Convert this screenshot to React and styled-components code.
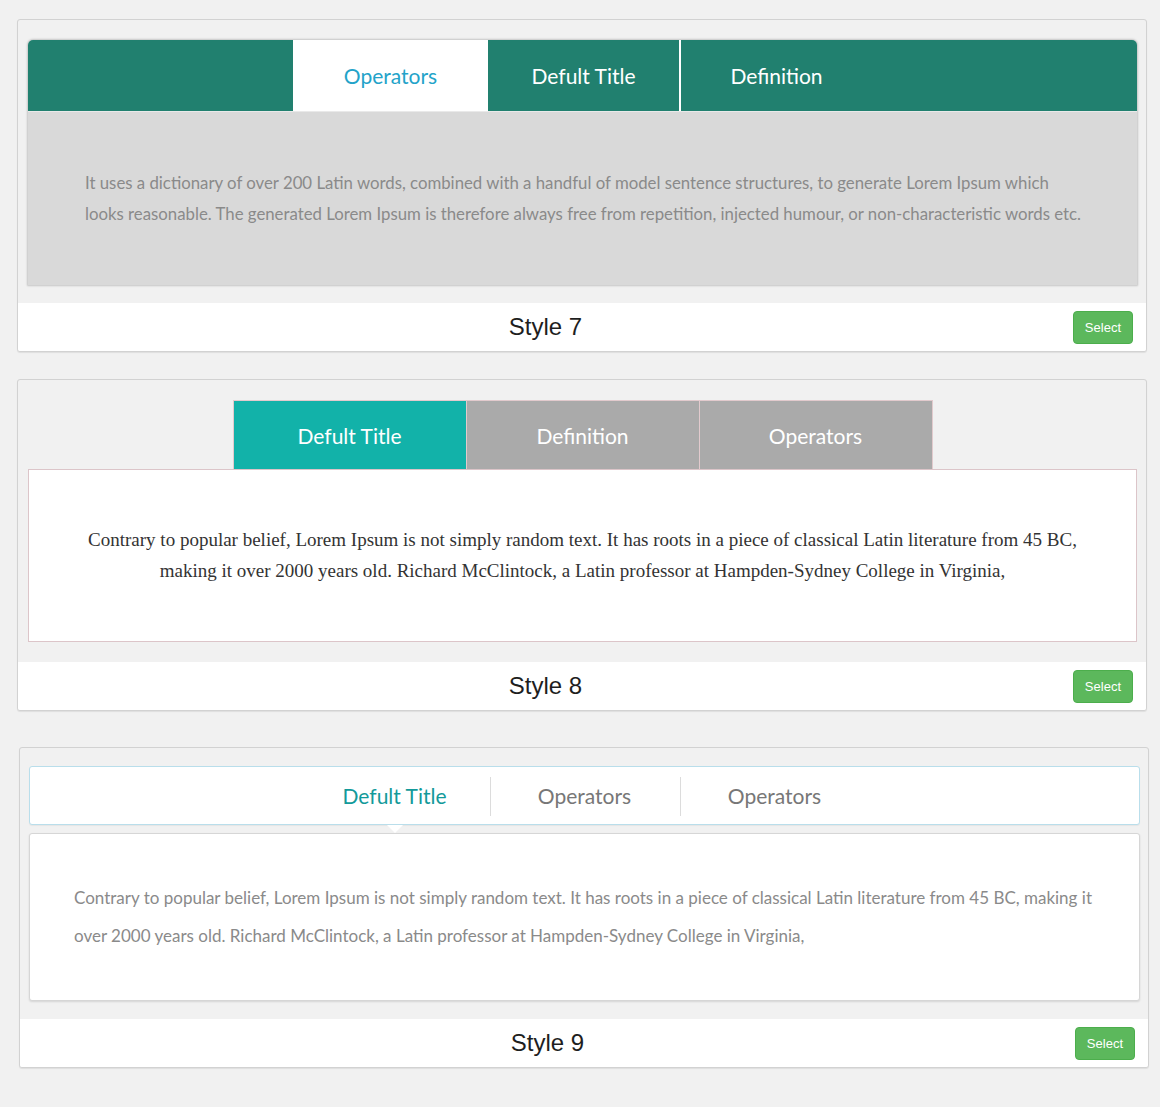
import styled, { createGlobalStyle, css } from "styled-components";

const GlobalStyle = createGlobalStyle`
  html, body {
    margin: 0;
    padding: 0;
    background: #f1f1f1;
  }
`;

const HUMAN = `Lato, "Open Sans", sans-serif`;

const Page = styled.div`
  width: 1160px;
  min-height: 1107px;
  box-sizing: border-box;
  padding: 19px 0 40px 17px;
  background: #f1f1f1;
`;

const Card = styled.section`
  width: 1130px;
  box-sizing: border-box;
  margin-top: ${(p) => p.$gap || 0}px;
  margin-left: ${(p) => p.$shift || 0}px;
  border: 1px solid #d2d2d2;
  border-radius: 3px;
  background: #f1f1f1;
  box-shadow: 0 1px 1px rgba(0, 0, 0, 0.08);
  overflow: hidden;
`;

const Preview = styled.div`
  padding: ${(p) => p.$pad || "20px 9px 18px 10px"};
`;

const Footer = styled.div`
  display: flex;
  align-items: center;
  height: 48px;
  background: #fff;
  padding-right: 13px;
`;

const FooterTitle = styled.h3`
  flex: 1;
  margin: 0;
  text-align: center;
  font-family: "Liberation Sans", Arial, sans-serif;
  font-weight: normal;
  font-size: 24px;
  color: #1e1e1e;
`;

const SelectButton = styled.button`
  font-family: "Liberation Sans", Arial, sans-serif;
  font-size: 13px;
  line-height: 19px;
  padding: 6px 11px;
  color: #fff;
  background: #5cb85c;
  border: 1px solid #4cae4c;
  border-radius: 4px;
  cursor: pointer;
`;

/* ---------- style 7 ---------- */

const Widget7 = styled.div`
  border-radius: 5px 5px 0 0;
  box-shadow: 0 0 2px 1px rgba(0, 0, 0, 0.18);
  overflow: hidden;
`;

const Bar7 = styled.div`
  display: flex;
  justify-content: center;
  height: 71px;
  background: #21806f;
  border-bottom: 1px solid #e9e9e9;
`;

const Tab7 = styled.div`
  width: 191px;
  display: flex;
  align-items: center;
  justify-content: center;
  font-family: ${HUMAN};
  font-size: 21px;
  color: #fff;
  border-left: 2px solid #fff;
  ${(p) =>
    p.$active &&
    css`
      background: #fff;
      color: #23a3c9;
    `}
`;

const Body7 = styled.div`
  background: #d9d9d9;
  padding: 55px 50px 56px 57px;
  font-family: ${HUMAN};
  font-size: 16.8px;
  line-height: 31px;
  color: #8a8a8a;
`;

/* ---------- style 8 ---------- */

const Bar8 = styled.div`
  display: flex;
  justify-content: center;
`;

const Tab8 = styled.div`
  width: 232px;
  height: 68px;
  display: flex;
  align-items: center;
  justify-content: center;
  font-family: ${HUMAN};
  font-size: 21px;
  color: #fff;
  background: ${(p) => (p.$active ? "#12b2a9" : "#aaaaaa")};
  border: 1px solid #e2cacd;
  border-bottom: none;
  &:not(:first-child) {
    border-left: none;
  }
`;

const Body8 = styled.div`
  background: #fff;
  border: 1px solid #dcc5c9;
  padding: 54px 40px 55px;
  text-align: center;
  font-family: "Liberation Serif", "Times New Roman", serif;
  font-size: 19px;
  line-height: 31px;
  color: #333;
`;

/* ---------- style 9 ---------- */

const Bar9 = styled.div`
  display: flex;
  justify-content: center;
  align-items: center;
  height: 57px;
  background: #fff;
  border: 1px solid #b9deeb;
  border-radius: 3px;
  box-shadow: 0 1px 1px rgba(0, 0, 0, 0.05);
`;

const Tab9 = styled.div`
  position: relative;
  width: 190px;
  height: 57px;
  display: flex;
  align-items: center;
  justify-content: center;
  font-family: ${HUMAN};
  font-size: 21px;
  color: ${(p) => (p.$active ? "#139a9a" : "#777")};
  &:not(:first-child)::before {
    content: "";
    position: absolute;
    left: 0;
    top: 10px;
    bottom: 8px;
    width: 1px;
    background: #dcdcdc;
  }
  ${(p) =>
    p.$active &&
    css`
      &::after {
        content: "";
        position: absolute;
        left: 50%;
        bottom: -9px;
        margin-left: -8px;
        border-left: 8px solid transparent;
        border-right: 8px solid transparent;
        border-top: 8px solid #fff;
      }
    `}
`;

const Body9 = styled.div`
  margin-top: 8px;
  background: #fff;
  border: 1px solid #d6d6d6;
  border-radius: 3px;
  box-shadow: 0 1px 2px rgba(0, 0, 0, 0.12);
  padding: 45px 36px 45px 44px;
  font-family: ${HUMAN};
  font-size: 17px;
  line-height: 38px;
  color: #8a8a8a;
`;

const CardFooter = ({ title }) => (
  <Footer>
    <FooterTitle>{title}</FooterTitle>
    <SelectButton>Select</SelectButton>
  </Footer>
);

const App = () => {
  return (
    <Page>
      <GlobalStyle />

      <Card>
        <Preview>
          <Widget7>
            <Bar7>
              <Tab7 $active>Operators</Tab7>
              <Tab7>Defult Title</Tab7>
              <Tab7>Definition</Tab7>
            </Bar7>
            <Body7>
              It uses a dictionary of over 200 Latin words, combined with a handful of model
              sentence structures, to generate Lorem Ipsum which looks reasonable. The generated
              Lorem Ipsum is therefore always free from repetition, injected humour, or
              non-characteristic words etc.
            </Body7>
          </Widget7>
        </Preview>
        <CardFooter title="Style 7" />
      </Card>

      <Card $gap={27}>
        <Preview $pad="20px 9px 20px 10px">
          <Bar8>
            <Tab8 $active>Defult Title</Tab8>
            <Tab8>Definition</Tab8>
            <Tab8>Operators</Tab8>
          </Bar8>
          <Body8>
            Contrary to popular belief, Lorem Ipsum is not simply random text. It has roots in a
            piece of classical Latin literature from 45 BC, making it over 2000 years old. Richard
            McClintock, a Latin professor at Hampden-Sydney College in Virginia,
          </Body8>
        </Preview>
        <CardFooter title="Style 8" />
      </Card>

      <Card $gap={36} $shift={2}>
        <Preview $pad="18px 8px 18px 9px">
          <Bar9>
            <Tab9 $active>Defult Title</Tab9>
            <Tab9>Operators</Tab9>
            <Tab9>Operators</Tab9>
          </Bar9>
          <Body9>
            Contrary to popular belief, Lorem Ipsum is not simply random text. It has roots in a
            piece of classical Latin literature from 45 BC, making it over 2000 years old. Richard
            McClintock, a Latin professor at Hampden-Sydney College in Virginia,
          </Body9>
        </Preview>
        <CardFooter title="Style 9" />
      </Card>
    </Page>
  );
};

export default App;
